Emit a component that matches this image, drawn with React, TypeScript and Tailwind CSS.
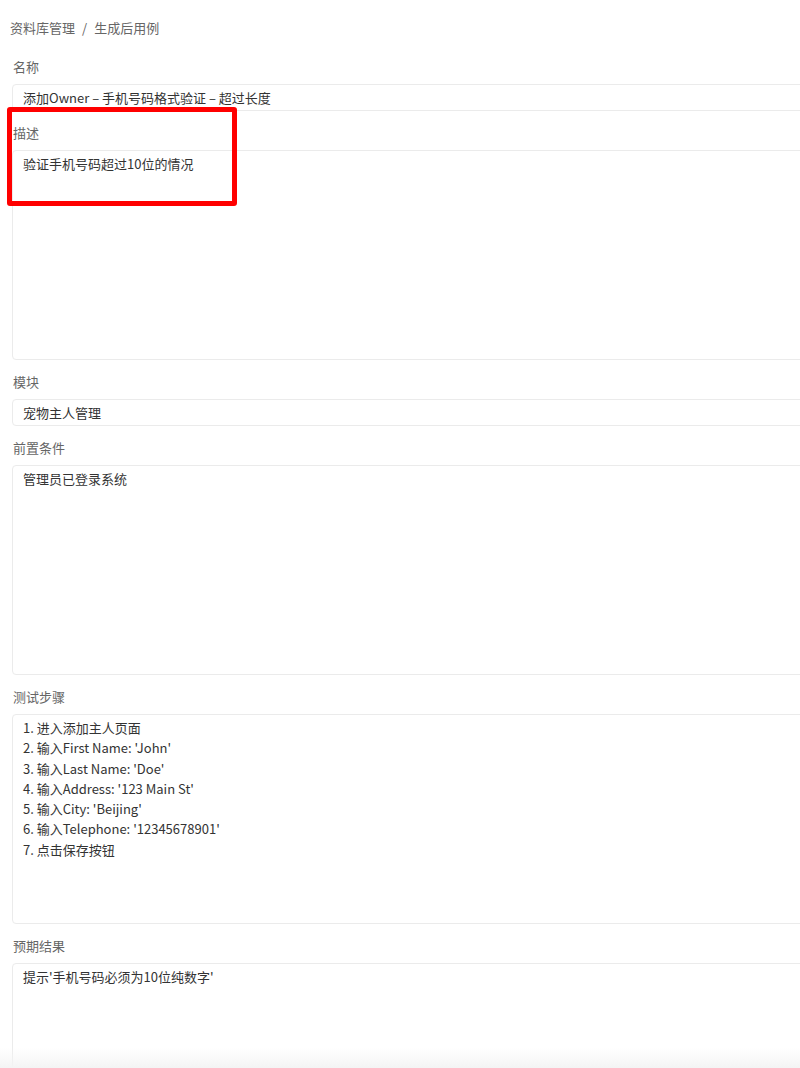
const font = {
  fontFamily: '"PingFang SC", "Noto Sans CJK SC", "Liberation Sans", sans-serif',
};

function Field({
  label,
  lines,
  tall,
}: {
  label: string;
  lines: string[];
  tall?: boolean;
}) {
  return (
    <div className="mt-3">
      <div className="h-5 leading-5 text-[13px] text-[#666] pl-[1px] mb-[7px]">{label}</div>
      {tall ? (
        <div className="w-[820px] h-[210px] border border-[#ebebeb] rounded-[4px] bg-white px-[10px] pt-[3px] text-[13px] leading-[20.3px] text-[#333]">
          {lines.map((l, i) => (
            <div key={i}>{l}</div>
          ))}
        </div>
      ) : (
        <div className="w-[820px] h-[27px] border border-[#ebebeb] rounded-[4px] bg-white px-[10px] flex items-center text-[13px] text-[#333]">
          {lines[0]}
        </div>
      )}
    </div>
  );
}

export default function App() {
  return (
    <div className="relative w-[800px] h-[1068px] overflow-hidden bg-white" style={font}>
      <div className="pl-3 pt-[18px]">
        <div className="-ml-[2px] h-5 leading-5 text-[13px] text-[#666] flex gap-[7px] mb-[19px]">
          <span>资料库管理</span>
          <span>/</span>
          <span>生成后用例</span>
        </div>
        <Field label="名称" lines={["添加Owner – 手机号码格式验证 – 超过长度"]} />
        <Field label="描述" lines={["验证手机号码超过10位的情况"]} tall />
        <Field label="模块" lines={["宠物主人管理"]} />
        <Field label="前置条件" lines={["管理员已登录系统"]} tall />
        <Field
          label="测试步骤"
          tall
          lines={[
            "1. 进入添加主人页面",
            "2. 输入First Name: 'John'",
            "3. 输入Last Name: 'Doe'",
            "4. 输入Address: '123 Main St'",
            "5. 输入City: 'Beijing'",
            "6. 输入Telephone: '12345678901'",
            "7. 点击保存按钮",
          ]}
        />
        <Field label="预期结果" lines={["提示'手机号码必须为10位纯数字'"]} tall />
      </div>
      {/* annotation */}
      <div className="absolute left-[7px] top-[107px] w-[230px] h-[99px] border-[5px] border-[#ff0000] rounded-[3px]" />
      <div className="absolute left-0 bottom-0 w-full h-5 bg-gradient-to-b from-transparent to-[#f4f4f4]" />
    </div>
  );
}
